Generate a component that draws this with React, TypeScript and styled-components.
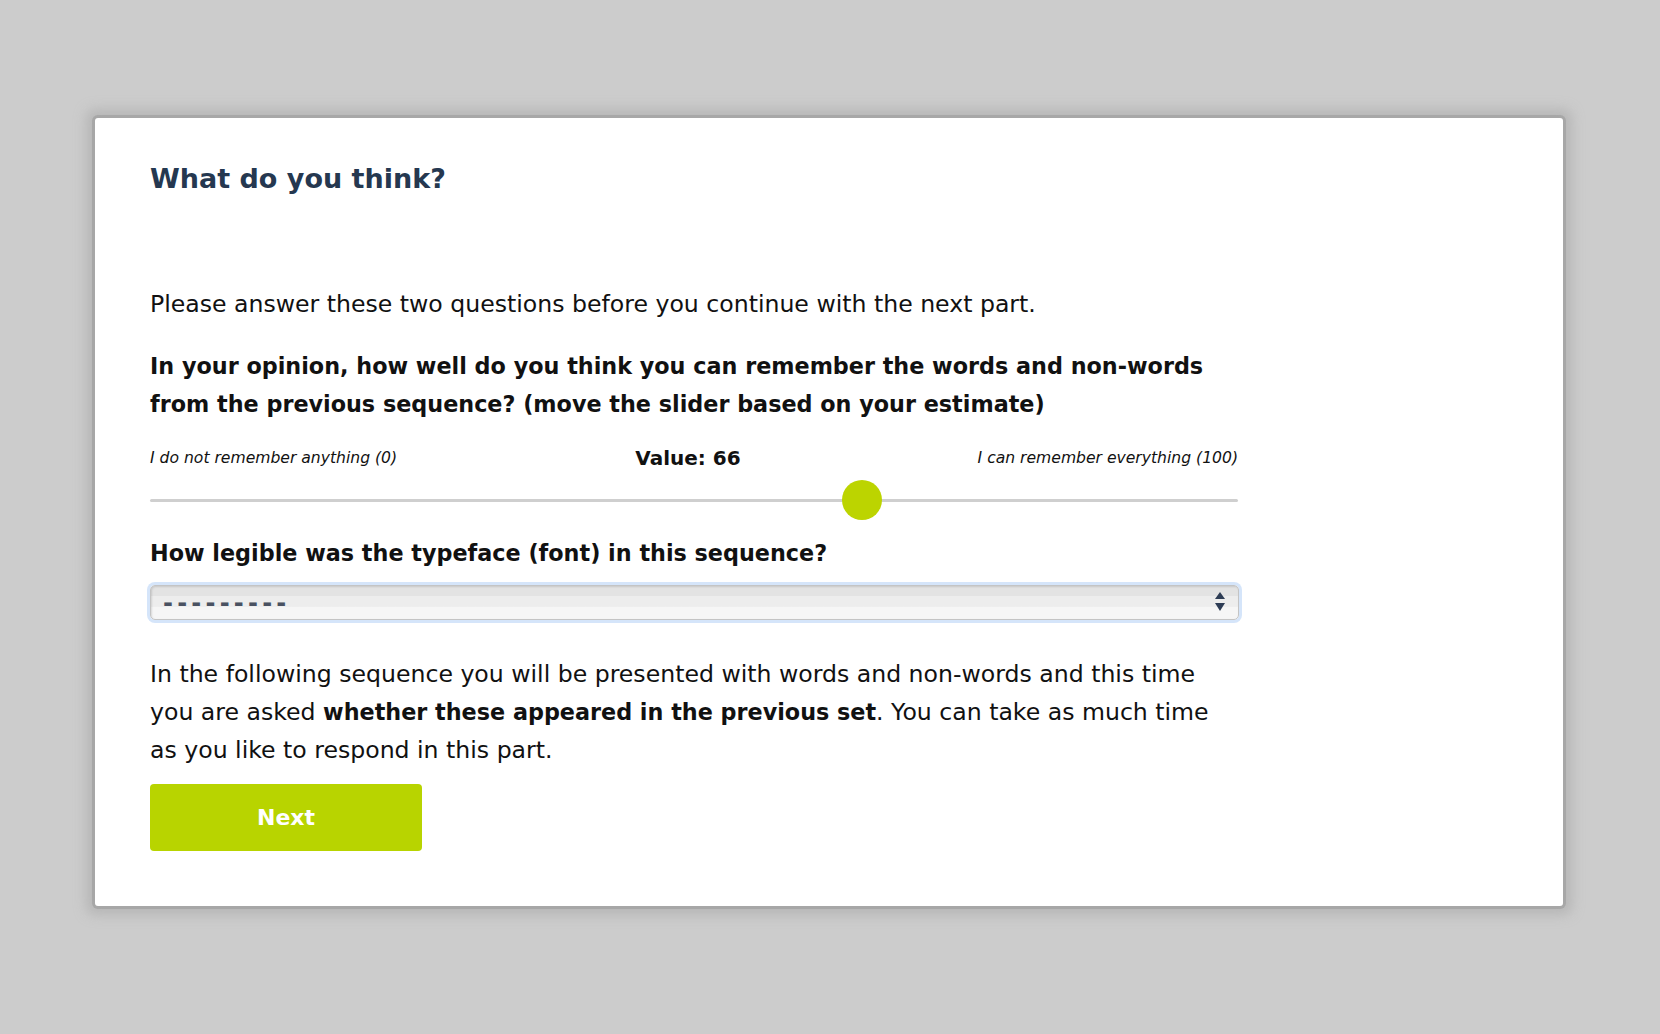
import React, { useState } from "react";
import styled, { createGlobalStyle } from "styled-components";

const Global = createGlobalStyle`
  html, body { margin: 0; padding: 0; background: #cccccc; }
  body { font-family: "DejaVu Sans", "Liberation Sans", sans-serif; color: #111; }
`;

const Page = styled.div`
  padding: 118px 97px 128px 95px;
`;

const Card = styled.div`
  background: #ffffff;
  border-radius: 3px;
  box-shadow: 0 0 0 3px rgba(150,150,150,0.5), 0 0 12px 9px rgba(165,165,165,0.55);
  padding: 43px 55px 55px 55px;
  box-sizing: border-box;
  height: 788px;
`;

const Content = styled.div`
  width: 1088px;
  display: flex;
  flex-direction: column;
`;

const Title = styled.h1`
  margin: 0;
  font-size: 27px;
  line-height: 36px;
  font-weight: bold;
  color: #253850;
`;

const Para = styled.p<{ $bold?: boolean; $mt: number }>`
  margin: ${(p) => p.$mt}px 0 0 0;
  font-size: ${(p) => (p.$bold ? "22.3px" : "23.6px")};
  line-height: 38px;
  font-weight: ${(p) => (p.$bold ? "bold" : "normal")};
  color: #111;
`;

const Strong = styled.strong`
  font-size: 22.3px;
  font-weight: bold;
`;

const LabelRow = styled.div`
  margin-top: 23px;
  height: 24px;
  display: grid;
  grid-template-columns: 1fr auto 1fr;
  align-items: center;
`;

const EndLabel = styled.span<{ $right?: boolean }>`
  font-size: 15.6px;
  font-style: italic;
  color: #111;
  text-align: ${(p) => (p.$right ? "right" : "left")};
`;

const ValueLabel = styled.span`
  font-size: 20px;
  font-weight: bold;
  color: #111;
  transform: translateX(-6px);
`;

const Range = styled.input`
  -webkit-appearance: none;
  appearance: none;
  margin: 10px 0 0 0;
  width: 1088px;
  height: 40px;
  background: transparent;
  outline: none;
  &::-webkit-slider-runnable-track {
    height: 3px;
    background: #cfcfcf;
    border-radius: 2px;
  }
  &::-webkit-slider-thumb {
    -webkit-appearance: none;
    width: 40px;
    height: 40px;
    border-radius: 50%;
    background: #bcd400;
    margin-top: -18.5px;
    border: none;
  }
`;

const SelectWrap = styled.div`
  margin-top: 13px;
  position: relative;
  height: 35px;
`;

const Select = styled.select`
  -webkit-appearance: none;
  appearance: none;
  width: 1089px;
  height: 35px;
  box-sizing: border-box;
  border: 1px solid #c4c4c4;
  border-radius: 5px;
  background: linear-gradient(#e3e3e3 0%, #e3e3e3 30%, #ededed 31%, #ededed 62%, #f6f6f6 63%, #f6f6f6 100%);
  box-shadow: 0 0 0 3px #d5e5fa, inset 1px 1px 2px rgba(0,0,0,0.12);
  padding: 0 0 0 12px;
  font-family: "DejaVu Sans", sans-serif;
  font-size: 24px;
  font-weight: bold;
  letter-spacing: 4.2px;
  color: #4a5262;
  outline: none;
`;

const Arrows = styled.svg`
  position: absolute;
  right: 12px;
  top: 7px;
  pointer-events: none;
`;

const Button = styled.button`
  margin-top: 15px;
  width: 272px;
  height: 67px;
  border: none;
  border-radius: 4px;
  background: #b8d400;
  color: #ffffff;
  font-family: "DejaVu Sans", sans-serif;
  font-weight: bold;
  font-size: 22px;
  cursor: pointer;
`;

export default function App() {
  const [value, setValue] = useState(66);
  return (
    <>
      <Global />
      <Page>
        <Card>
          <Content>
            <Title>What do you think?</Title>
            <Para $mt={88}>Please answer these two questions before you continue with the next part.</Para>
            <Para $mt={24} $bold>
              In your opinion, how well do you think you can remember the words and non-words from the previous sequence? (move the slider based on your estimate)
            </Para>
            <LabelRow>
              <EndLabel>I do not remember anything (0)</EndLabel>
              <ValueLabel>Value: {value}</ValueLabel>
              <EndLabel $right>I can remember everything (100)</EndLabel>
            </LabelRow>
            <Range
              type="range"
              min={0}
              max={100}
              value={value}
              onChange={(e) => setValue(Number(e.target.value))}
            />
            <Para $mt={14} $bold>How legible was the typeface (font) in this sequence?</Para>
            <SelectWrap>
              <Select defaultValue="">
                <option value="">---------</option>
              </Select>
              <Arrows width="12" height="20" viewBox="0 0 12 20">
                <path d="M6 0 L11 7 L1 7 Z" fill="#2e3d55" />
                <path d="M1 11 L11 11 L6 19 Z" fill="#2e3d55" />
              </Arrows>
            </SelectWrap>
            <Para $mt={35}>
              In the following sequence you will be presented with words and non-words and this time you are asked <Strong>whether these appeared in the previous set</Strong>. You can take as much time as you like to respond in this part.
            </Para>
            <div>
              <Button>Next</Button>
            </div>
          </Content>
        </Card>
      </Page>
    </>
  );
}
